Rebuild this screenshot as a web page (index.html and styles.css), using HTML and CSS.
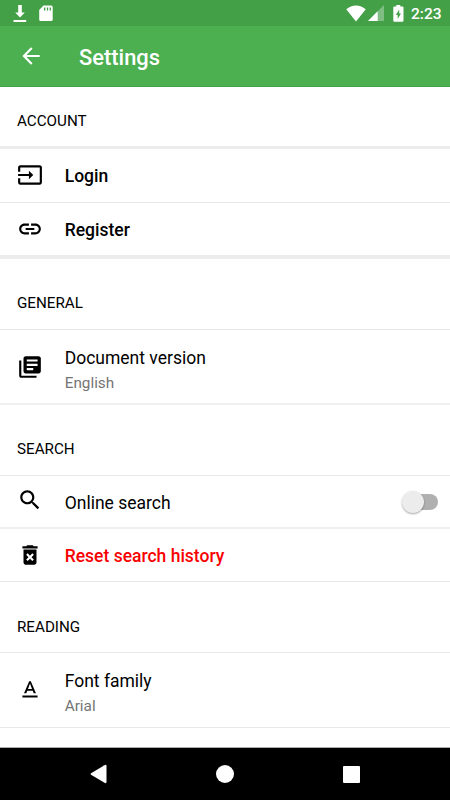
FILE: index.html
```html
<!DOCTYPE html>
<html lang="en">
<head>
<meta charset="utf-8">
<title>Settings</title>
<link rel="stylesheet" href="styles.css">
</head>
<body>
<div class="screen">
  <div class="status">
    <svg class="download" width="14" height="18" viewBox="0 0 14 18"><path fill="#fff" d="M5.2 0h3.6v7.5h3L7 12.5 2.2 7.500h3zM.5 15h12.700v2H.5z"/></svg>
    <svg class="sdcard" width="14" height="17" viewBox="0 0 14 17"><path fill="#fff" d="M4.500.5h7.500Q13.700.5 13.700 2v12.500q0 1.500-1.500 1.500h-10.500Q.2 16 .2 14.500V5z"/><path stroke="#43a047" stroke-width="1.300" d="M5.700 2.500v3M8.500 2.500v3M11.300 2.500v3"/></svg>
    <span class="spacer"></span>
    <svg class="wifi" width="20" height="17" viewBox="0 0 20 17"><path fill="#fff" d="M.2 4.300Q4.600.5 10 .5t9.800 3.800L10 16.500z"/></svg>
    <svg class="signal" width="16" height="16" viewBox="0 0 16 16"><path fill="#fff" fill-opacity=".32" d="M16 0v16H0z"/><path fill="#fff" d="M9.700 6.300V16H0z"/></svg>
    <svg class="battery" width="11" height="17" viewBox="0 0 11 17"><path fill="#fff" d="M3.300 0h4v1.500h2.200q1 0 1 1v13.300q0 1-1 1H1.300q-1 0-1-1V2.500q0-1 1-1h2z"/><path fill="#43a047" d="M6.200 4.500v4h1.800l-3.300 5.500v-4H2.900z"/></svg>
    <span class="clock">2:23</span>
  </div>
  <header class="appbar">
    <svg class="back" width="26" height="26" viewBox="0 0 24 24"><path fill="#fff" d="M20 11H7.830l5.590-5.590L12 4l-8 8 8 8 1.410-1.410L7.830 13H20v-2z"/></svg>
    <h1>Settings</h1>
  </header>
  <main>
    <h2 class="first">ACCOUNT</h2>
    <div class="row login">
      <svg viewBox="0 0 24 24"><path d="M21 3.010H3c-1.100 0-2 .9-2 2V9h2V4.990h18v14.030H3V15H1v4.010c0 1.100.9 1.980 2 1.980h18c1.100 0 2-.88 2-1.980v-14c0-1.110-.9-2-2-2zM11 16l4-4-4-4v3H1v2h10v3z"/></svg>
      <span class="label strong">Login</span>
    </div>
    <div class="row register">
      <svg viewBox="0 0 24 24"><path d="M3.900 12c0-1.710 1.390-3.100 3.100-3.100h4V7H7c-2.760 0-5 2.240-5 5s2.240 5 5 5h4v-1.900H7c-1.710 0-3.100-1.390-3.100-3.100zM8 13h8v-2H8v2zm9-6h-4v1.900h4c1.710 0 3.100 1.390 3.100 3.100s-1.390 3.100-3.100 3.100h-4V17h4c2.760 0 5-2.240 5-5s-2.240-5-5-5z"/></svg>
      <span class="label strong">Register</span>
    </div>
    <h2>GENERAL</h2>
    <div class="row double">
      <svg viewBox="0 0 24 24"><path d="M4 6H2v14c0 1.100.9 2 2 2h14v-2H4V6zm16-4H8c-1.100 0-2 .9-2 2v12c0 1.100.9 2 2 2h12c1.100 0 2-.9 2-2V4c0-1.100-.9-2-2-2zm-1 9H9V9h10v2zm-4 4H9v-2h6v2zm4-8H9V5h10v2z"/></svg>
      <div class="texts"><span class="label">Document version</span><span class="value">English</span></div>
    </div>
    <h2>SEARCH</h2>
    <div class="row online">
      <svg viewBox="0 0 24 24"><path d="M15.500 14h-.79l-.28-.27C15.410 12.590 16 11.110 16 9.500 16 5.910 13.090 3 9.500 3S3 5.910 3 9.500 5.910 16 9.500 16c1.610 0 3.090-.59 4.230-1.570l.27.28v.79l5 4.990L20.490 19l-4.990-5zm-6 0C7.010 14 5 11.990 5 9.500S7.010 5 9.500 5 14 7.010 14 9.500 11.990 14 9.500 14z"/></svg>
      <span class="label">Online search</span>
      <span class="switch"><span class="thumb"></span></span>
    </div>
    <div class="row reset">
      <svg viewBox="0 0 24 24"><path d="M6 19c0 1.100.9 2 2 2h8c1.100 0 2-.9 2-2V7H6v12zm2.460-7.120l1.410-1.410L12 12.590l2.120-2.120 1.410 1.410L13.410 14l2.120 2.120-1.410 1.410L12 15.410l-2.120 2.120-1.410-1.410L10.590 14l-2.130-2.120zM15.500 4l-1-1h-5l-1 1H5v2h14V4z"/></svg>
      <span class="label strong danger">Reset search history</span>
    </div>
    <h2 class="reading">READING</h2>
    <div class="row double font">
      <svg viewBox="0 0 24 24"><path d="M5 17v2h14v-2H5zm4.500-4.200h5l.9 2.200h2.100L12.750 4h-1.500L6.500 15h2.100l.9-2.200zM12 5.980L13.870 11h-3.740L12 5.980z"/></svg>
      <div class="texts"><span class="label">Font family</span><span class="value">Arial</span></div>
    </div>
  </main>
  <nav>
    <svg width="18" height="20" viewBox="0 0 18 20"><path fill="#fff" d="M1 9.200 14.500 1.200Q16.500.2 16.500 2v16q0 1.800-2 .8L1 10.800Q0 10 1 9.200z"/></svg>
    <svg class="home" width="18" height="18" viewBox="0 0 18 18"><circle cx="9" cy="9" r="9" fill="#fff"/></svg>
    <svg width="17" height="17" viewBox="0 0 17 17"><rect width="17" height="17" rx="1" fill="#fff"/></svg>
  </nav>
</div>
</body>
</html>
```

FILE: styles.css
```css
* { box-sizing: border-box; }
body { margin: 0; font-family: Roboto, "Liberation Sans", sans-serif; color: #000; background: #fff; }
svg { display: block; flex: none; }
.screen { width: 450px; height: 800px; display: flex; flex-direction: column; overflow: hidden; }
.status { height: 26px; flex: none; background: #43a047; display: flex; align-items: flex-start; padding: 5px 8px 0 13px; }
.sdcard { margin-left: 12px; }
.spacer { flex: 1; }
.signal { margin: 0 9px 0 2px; }
.clock { color: #fff; font-size: 15.5px; line-height: 18px; font-weight: 500; margin-left: 7px; width: 31px; white-space: nowrap; }
.appbar { height: 61px; flex: none; background: #4caf50; border-bottom: 1px solid #43a047; display: flex; align-items: center; padding-left: 18px; }
.appbar h1 { margin: 4px 0 0 35px; font-size: 21.900px; line-height: 26px; font-weight: 500; color: #fff; }
main { flex: 1; min-height: 0; overflow: hidden; }
h2 { margin: 0; height: 71px; padding: 34px 0 0 17px; font-size: 15.2px; line-height: 20px; font-weight: 400; border-bottom: 1px solid #e8e8e8; }
h2.first { height: 62px; padding-top: 24px; border-bottom: 3px solid #ececec; }
h2.reading { padding-top: 35px; }
.row { display: flex; align-items: center; height: 54px; padding: 0 12px 0 16.500px; border-bottom: 1px solid #e8e8e8; }
.row > svg { width: 26px; height: 26px; margin-right: 22.200px; }
.row.login > svg { margin-bottom: 1px; }
.row.register { height: 56px; border-bottom: 4px solid #ececec; }
.row.double { height: 75px; border-bottom: 2px solid #f0f0f0; }
.row.double.font { border-bottom: 1px solid #e8e8e8; }
.row.online { height: 53px; border-bottom: 2px solid #f0f0f0; }
.row.online > svg { margin-bottom: 4px; }
.row.online .label { padding-top: 2px; }
.row.reset { height: 53px; }
.register .label, .reset .label { padding-top: 2px; }
.texts { display: flex; flex-direction: column; padding-top: 6px; }
.font .texts { padding-top: 5px; }
.label { font-size: 17.5px; line-height: 24px; white-space: nowrap; }
.strong { font-weight: 500; }
.danger { color: #f80000; }
.value { font-size: 15.3px; line-height: 20px; margin-top: 3px; color: #757575; }
.switch { width: 33px; height: 16px; margin-left: auto; border-radius: 8px; background: #b0b0b0; position: relative; }
.thumb { position: absolute; left: -3px; top: -3px; width: 22px; height: 22px; border-radius: 50%; background: #ececec; box-shadow: 0 1px 2px rgba(0,0,0,.35); }
nav { height: 53px; flex: none; background: #000; border-top: 1px solid #aaa; display: flex; align-items: center; padding: 0 90px; justify-content: space-between; }
.home { margin-right: 2px; }
```
